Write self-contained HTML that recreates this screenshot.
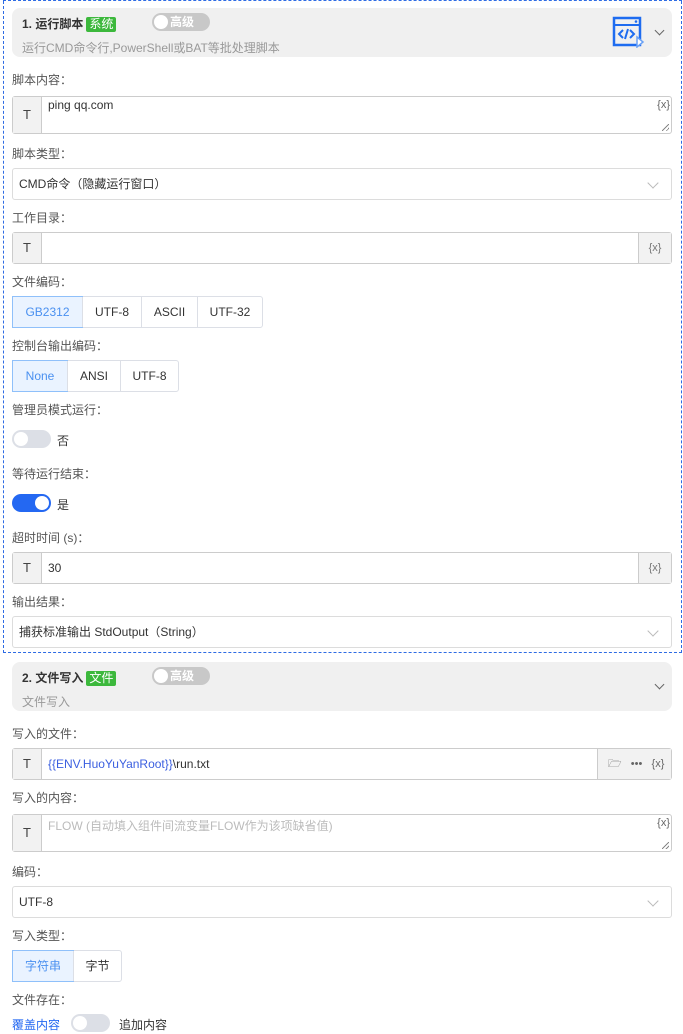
<!DOCTYPE html>
<html><head><meta charset="utf-8"><style>
*{box-sizing:border-box;margin:0;padding:0}
body{width:683px;height:1034px;overflow:hidden;background:#fff;font-family:"Liberation Sans","Noto Sans CJK SC",sans-serif;font-size:12px;color:#333;position:relative}
.a{position:absolute}
.dash{left:3px;top:1px;width:679px;height:652px;border:1px dashed #2d6be4;border-top:none}
.dt{left:3px;top:0;width:679px;height:1px;border-top:1px dashed #2d6be4}
.hd{left:12px;width:660px;height:49px;background:#f0f0f0;border-radius:8px}
.tt{font-weight:bold;font-size:12px;color:#333}
.tag{display:inline-block;background:#3cb83c;color:#fff;font-weight:normal;padding:0 3px;border-radius:2px;line-height:15px;margin-left:3px}
.sub{color:#999;font-size:12px}
.tg{width:58px;height:18px;border-radius:9px;background:#c8c8c8;color:#fff;font-weight:bold;font-size:12px;line-height:18px;padding-left:18px}
.tg:before{content:"";position:absolute;left:2px;top:2px;width:14px;height:14px;border-radius:7px;background:#fff}
.lb{left:12px;color:#555;font-size:12px}
.box{left:12px;width:660px;border:1px solid #ccc;border-radius:3px;background:#fff}
.T{position:absolute;left:0;top:0;bottom:0;width:29px;background:#f2f2f2;border-right:1px solid #ccc;text-align:center;color:#444;font-size:13px;font-weight:normal}
.x{position:absolute;right:0;top:0;bottom:0;width:33px;background:#f2f2f2;border-left:1px solid #ccc;text-align:center;color:#777;font-size:11px}
.sel{left:12px;width:660px;height:32px;border:1px solid #dcdcdc;border-radius:3px;padding-left:6px;line-height:30px;color:#333}
.sel:after{content:"";position:absolute;right:14px;top:10px;width:7px;height:7px;border-right:1px solid #bbb;border-bottom:1px solid #bbb;transform:rotate(45deg)}
.grp{left:12px;height:32px;display:flex;border:1px solid #dcdfe6;border-radius:3px}
.grp div{height:30px;line-height:30px;text-align:center;border-left:1px solid #dcdfe6;color:#333}
.grp div:first-child{border-left:none;background:#eaf3ff;color:#4a90f0;outline:1px solid #8fc0fa}
.sw{width:39px;height:18px;border-radius:9px;background:#dcdfe6}
.sw:before{content:"";position:absolute;left:2px;top:2px;width:14px;height:14px;border-radius:7px;background:#fff}
.sw.on{background:#2468f2}
.sw.on:before{left:23px}
.rs{position:absolute;right:2px;bottom:2px;width:7px;height:7px;background:linear-gradient(135deg,transparent 45%,#888 45%,#888 55%,transparent 55%,transparent 75%,#888 75%,#888 85%,transparent 85%)}
.chev{width:7px;height:7px;border-right:1.5px solid #666;border-bottom:1.5px solid #666;transform:rotate(45deg)}
</style></head><body>
<div class="a dt"></div>
<div class="a dash"></div>

<div class="a hd" style="top:8px"></div>
<div class="a tt" style="left:22px;top:15px">1. 运行脚本<span class="tag">系统</span></div>
<div class="a tg" style="left:152px;top:13px">高级</div>
<div class="a sub" style="left:22px;top:39px">运行CMD命令行,PowerShell或BAT等批处理脚本</div>
<svg class="a" style="left:612px;top:16px" width="34" height="32" viewBox="0 0 34 32"><rect x="2" y="2" width="26" height="27" fill="none" stroke="#1e6cf0" stroke-width="2.5"/><line x1="2" y1="9" x2="28" y2="9" stroke="#1e6cf0" stroke-width="2"/><circle cx="24" cy="5.5" r="1.3" fill="#1e6cf0"/><path d="M11 14l-4 4 4 4M18 14l4 4-4 4M16 13l-3 10" fill="none" stroke="#1e6cf0" stroke-width="2"/><path d="M25 21l6 5-6 5z" fill="#fff" stroke="#6aa1f5" stroke-width="1.5"/></svg>
<div class="a chev" style="left:656px;top:27px"></div>

<div class="a lb" style="top:71px">脚本内容：</div>
<div class="a box" style="top:96px;height:38px"><div class="T" style="line-height:36px">T</div><div class="a" style="left:35px;top:1px">ping qq.com</div><div class="a" style="right:1px;top:2px;color:#666;font-size:11px">{x}</div><div class="rs"></div></div>

<div class="a lb" style="top:145px">脚本类型：</div>
<div class="a sel" style="top:168px">CMD命令（隐藏运行窗口）</div>

<div class="a lb" style="top:209px">工作目录：</div>
<div class="a box" style="top:232px;height:32px"><div class="T" style="line-height:30px">T</div><div class="x" style="line-height:30px">{x}</div></div>

<div class="a lb" style="top:273px">文件编码：</div>
<div class="a grp" style="top:296px"><div style="width:69px">GB2312</div><div style="width:59px">UTF-8</div><div style="width:56px">ASCII</div><div style="width:65px">UTF-32</div></div>

<div class="a lb" style="top:337px">控制台输出编码：</div>
<div class="a grp" style="top:360px"><div style="width:54px">None</div><div style="width:53px">ANSI</div><div style="width:58px">UTF-8</div></div>

<div class="a lb" style="top:401px">管理员模式运行：</div>
<div class="a sw" style="left:12px;top:430px"></div><div class="a" style="left:57px;top:432px">否</div>

<div class="a lb" style="top:465px">等待运行结束：</div>
<div class="a sw on" style="left:12px;top:494px"></div><div class="a" style="left:57px;top:496px">是</div>

<div class="a lb" style="top:529px">超时时间 (s)：</div>
<div class="a box" style="top:552px;height:32px"><div class="T" style="line-height:30px">T</div><div class="a" style="left:35px;top:8px">30</div><div class="x" style="line-height:30px">{x}</div></div>

<div class="a lb" style="top:593px">输出结果：</div>
<div class="a sel" style="top:616px">捕获标准输出 StdOutput（String）</div>

<div class="a hd" style="top:662px"></div>
<div class="a tt" style="left:22px;top:669px">2. 文件写入<span class="tag">文件</span></div>
<div class="a tg" style="left:152px;top:667px">高级</div>
<div class="a sub" style="left:22px;top:693px">文件写入</div>
<div class="a chev" style="left:656px;top:681px"></div>

<div class="a lb" style="top:725px">写入的文件：</div>
<div class="a box" style="top:748px;height:32px"><div class="T" style="line-height:30px">T</div><div class="a" style="left:35px;top:8px"><span style="color:#3b5fe0">{{ENV.HuoYuYanRoot}}</span>\run.txt</div><div class="x" style="width:74px;line-height:30px;text-align:left;padding-left:10px;color:#666">🗁&nbsp;&nbsp;&nbsp;•••&nbsp;&nbsp;&nbsp;{x}</div></div>

<div class="a lb" style="top:789px">写入的内容：</div>
<div class="a box" style="top:814px;height:38px"><div class="T" style="line-height:36px">T</div><div class="a" style="left:35px;top:2px;color:#bbb">FLOW (自动填入组件间流变量FLOW作为该项缺省值)</div><div class="a" style="right:1px;top:2px;color:#666;font-size:11px">{x}</div><div class="rs"></div></div>

<div class="a lb" style="top:863px">编码：</div>
<div class="a sel" style="top:886px">UTF-8</div>

<div class="a lb" style="top:927px">写入类型：</div>
<div class="a grp" style="top:950px"><div style="width:60px">字符串</div><div style="width:48px">字节</div></div>

<div class="a lb" style="top:991px">文件存在：</div>
<div class="a" style="left:12px;top:1016px;color:#2468f2">覆盖内容</div>
<div class="a sw" style="left:71px;top:1014px"></div>
<div class="a" style="left:119px;top:1016px">追加内容</div>
</body></html>
